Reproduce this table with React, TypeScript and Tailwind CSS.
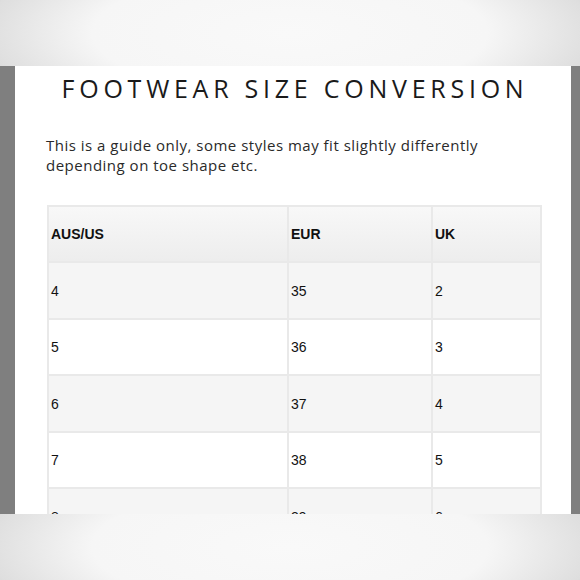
import React from "react";

const rows: [string, string, string][] = [
  ["4", "35", "2"],
  ["5", "36", "3"],
  ["6", "37", "4"],
  ["7", "38", "5"],
  ["8", "39", "6"],
];

function Band() {
  return (
    <div
      className="h-[66px] w-full shrink-0"
      style={{
        background:
          "radial-gradient(ellipse 62% 170% at 50% 50%, #f9f9f9 0%, #f6f6f6 55%, #dedede 85%, #b8b8b8 100%)",
      }}
    />
  );
}

export default function App() {
  return (
    <div className="w-[580px] h-[580px] overflow-hidden flex flex-col bg-white">
      <Band />
      <div className="h-[448px] flex overflow-hidden shrink-0">
        <div className="w-[15px] bg-[#7f7f7f] shrink-0" />
        <div className="flex-1 bg-white flex flex-col overflow-hidden">
          <h1
            className="mt-[7px] pl-[4px] text-center text-[25px] leading-[30px] tracking-[0.19em] text-[#1a1a1a] font-normal"
            style={{ fontFamily: "'Open Sans', 'Noto Sans', sans-serif" }}
          >
            FOOTWEAR SIZE CONVERSION
          </h1>
          <p
            className="mt-[32px] pl-[31px] text-[15px] leading-[20px] tracking-[0.5px] text-[#2a2a2a]"
            style={{ fontFamily: "'Open Sans', 'Noto Sans', sans-serif" }}
          >
            This is a guide only, some styles may fit slightly differently
            <br />
            depending on toe shape etc.
          </p>
          <div className="mt-[30px] ml-[32px] flex">
            <div
              className="grid grid-cols-[238px_142px_107px] gap-[2px] p-[2px] bg-[#e9e9e9] text-[14px] text-[#111]"
              style={{ fontFamily: "'Liberation Sans', Arial, sans-serif" }}
            >
              {["AUS/US", "EUR", "UK"].map((h) => (
                <div
                  key={h}
                  className="h-[54px] flex items-center pl-[2px] font-bold bg-gradient-to-b from-[#f8f8f8] to-[#ededed]"
                >
                  {h}
                </div>
              ))}
              {rows.map((r, i) =>
                r.map((c, j) => (
                  <div
                    key={`${i}-${j}`}
                    className={`h-[54.5px] flex items-center pl-[2px] pt-[2px] ${
                      i % 2 === 0 ? "bg-[#f5f5f5]" : "bg-white"
                    }`}
                  >
                    {c}
                  </div>
                ))
              )}
            </div>
          </div>
        </div>
        <div className="w-[9px] bg-[#7f7f7f] shrink-0" />
      </div>
      <Band />
    </div>
  );
}
